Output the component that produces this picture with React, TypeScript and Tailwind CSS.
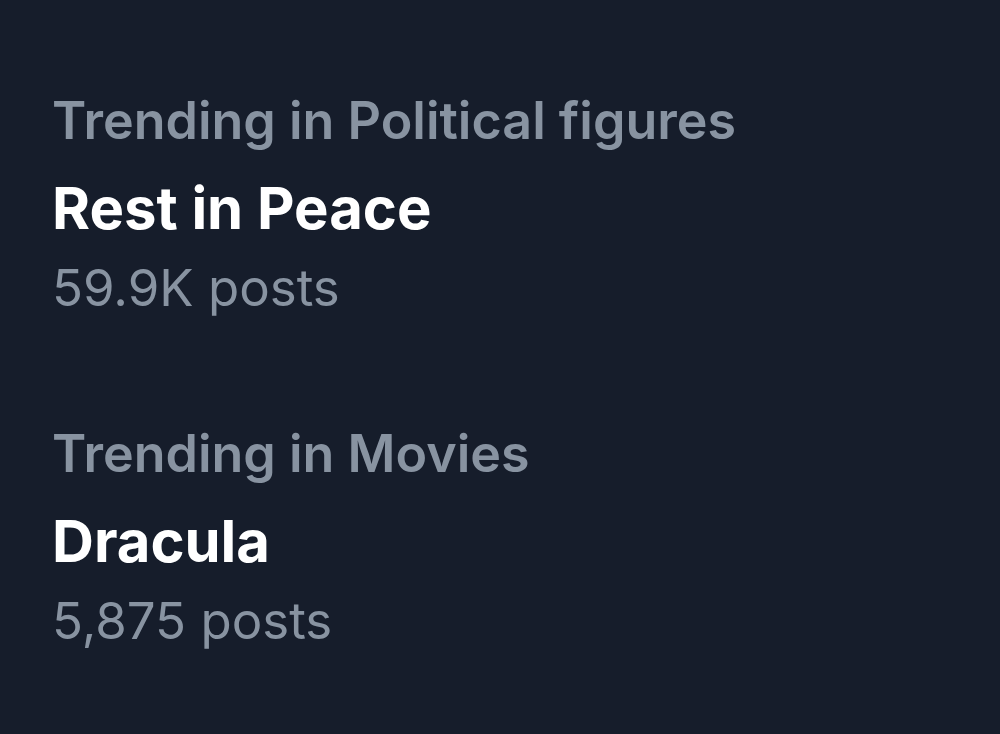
export default function App() {
  const items = [
    { cat: "Trending in Political figures", title: "Rest in Peace", posts: "59.9K posts" },
    { cat: "Trending in Movies", title: "Dracula", posts: "5,875 posts" },
  ];
  return (
    <div className="w-[1000px] h-[734px] bg-[#161d2b] overflow-hidden font-['Inter',sans-serif] pl-[52px] pt-[91px] flex flex-col gap-[105px]">
      {items.map((it) => (
        <div key={it.title} className="flex flex-col">
          <div className="text-[52px] leading-[60px] font-semibold text-[#8893a1] whitespace-nowrap">{it.cat}</div>
          <div className="mt-[22px] text-[58px] leading-[70px] font-bold text-white whitespace-nowrap">{it.title}</div>
          <div className="mt-[14px] text-[51px] leading-[62px] text-[#8893a1] whitespace-nowrap">{it.posts}</div>
        </div>
      ))}
    </div>
  );
}
